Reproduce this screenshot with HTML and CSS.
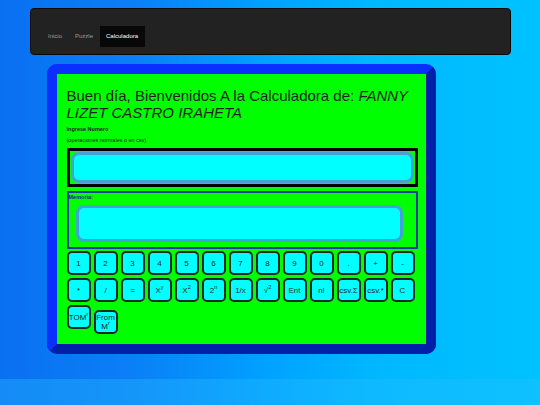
FILE: index.html
```html
<!DOCTYPE html>
<html lang="es">
<head>
<meta charset="utf-8">
<title>Calculadora</title>
<link rel="stylesheet" href="styles.css">
</head>
<body>
<div class="page">
  <nav class="navbar">
    <ul class="nav">
      <li><a href="#">Inicio</a></li>
      <li><a href="#">Puzzle</a></li>
      <li class="active"><a href="#">Calculadora</a></li>
    </ul>
  </nav>

  <main class="calc">
    <h1 class="title">Buen día, Bienvenidos A la Calculadora de: <em>FANNY LIZET CASTRO IRAHETA</em></h1>
    <p class="label">Ingrese Numero</p>
    <p class="hint">(operaciones normales o en csv)</p>

    <div class="screen">
      <input class="field" type="text">
    </div>

    <div class="memory">
      <span class="memory-label">Memoria:</span>
      <input class="field memory-field" type="text">
    </div>

    <div class="keys">
      <button class="key">1</button>
      <button class="key">2</button>
      <button class="key">3</button>
      <button class="key">4</button>
      <button class="key">5</button>
      <button class="key">6</button>
      <button class="key">7</button>
      <button class="key">8</button>
      <button class="key">9</button>
      <button class="key">0</button>
      <button class="key">.</button>
      <button class="key">+</button>
      <button class="key">-</button>

      <button class="key">*</button>
      <button class="key">/</button>
      <button class="key">=</button>
      <button class="key">X<sup>y</sup></button>
      <button class="key">X<sup>2</sup></button>
      <button class="key">2<sup>n</sup></button>
      <button class="key">1/x</button>
      <button class="key">√<sup>2</sup></button>
      <button class="key">Ent</button>
      <button class="key">n!</button>
      <button class="key">csv.Σ</button>
      <button class="key">csv.*</button>
      <button class="key">C</button>

      <button class="key">TOM<sup>r</sup></button>
      <button class="key">From M<sup>r</sup></button>
    </div>
  </main>
</div>
</body>
</html>
```

FILE: styles.css
```css
html {
  height: 100%;
  background:
    linear-gradient(180deg, rgba(0, 0, 0, 0) 93.6%, rgba(40, 190, 255, 0.35) 93.6%),
    linear-gradient(90deg, #0a70f2 0%, #0a80f6 25%, #00a2ff 50%, #00b8ff 70%, #00c2ff 100%);
}

body {
  margin: 0;
  font-family: "Liberation Sans", Arial, sans-serif;
  color: #222;
}

.page {
  width: 481px;
  margin: 0 auto;
  padding-top: 8px;
}

/* top navigation bar */
.navbar {
  height: 47px;
  box-sizing: border-box;
  background: #222;
  border: 1px solid #080808;
  border-radius: 4px;
  display: flex;
  align-items: center;
  padding: 9px 0 0 11px;
}

.nav {
  list-style: none;
  margin: 0;
  padding: 0;
  display: flex;
}

.nav a {
  display: block;
  padding: 6.5px 6.5px;
  font-size: 6px;
  line-height: 8px;
  color: #9d9d9d;
  text-decoration: none;
}

.nav .active a {
  background: #080808;
  color: #fff;
}

/* calculator body */
.calc {
  width: 389px;
  box-sizing: border-box;
  margin: 9px 0 0 17px;
  background: #00ff00;
  border: 10px solid;
  border-color: #0a30ff #0020a8 #0020a8 #0a30ff;
  border-radius: 10px;
  padding: 13px 8px 10px 10px;
}

.title {
  margin: 0;
  font-size: 15px;
  line-height: 17px;
  font-weight: normal;
  color: #222;
}

.label,
.hint {
  margin: 4.5px 0 0;
  font-size: 5.5px;
  line-height: 7px;
}

.label {
  font-weight: bold;
}

.hint {
  margin-top: 4px;
}

.field {
  display: block;
  box-sizing: border-box;
  width: 100%;
  margin: 0;
  background: #00ffff;
  border: 3px solid #45a2d2;
  border-radius: 8px;
  outline: none;
}

.screen {
  margin-top: 4.5px;
  border: 3px solid #000;
  padding: 1px;
}

.screen .field {
  height: 31px;
}

.memory {
  margin-top: 4px;
  border: 2px solid #1e3ca0;
  padding: 0 12px 5px 0;
}

.memory-label {
  display: block;
  font-size: 5.5px;
  line-height: 8px;
  font-weight: bold;
  color: #1a2890;
}

.memory-field {
  width: 327px;
  height: 37px;
  margin: 4px 0 0 7px;
}

/* keypad */
.keys {
  margin-top: 2px;
  display: flex;
  flex-wrap: wrap;
  align-items: baseline;
  gap: 3px;
}

.key {
  width: 24px;
  height: 24px;
  box-sizing: border-box;
  padding: 0;
  background: #00ffff;
  border: 2px solid #1f2a22;
  border-radius: 5px;
  font-family: "Liberation Sans", Arial, sans-serif;
  font-size: 8px;
  color: #222;
  overflow: visible;
}

.key sup {
  font-size: 5.5px;
  line-height: 0;
}
```
